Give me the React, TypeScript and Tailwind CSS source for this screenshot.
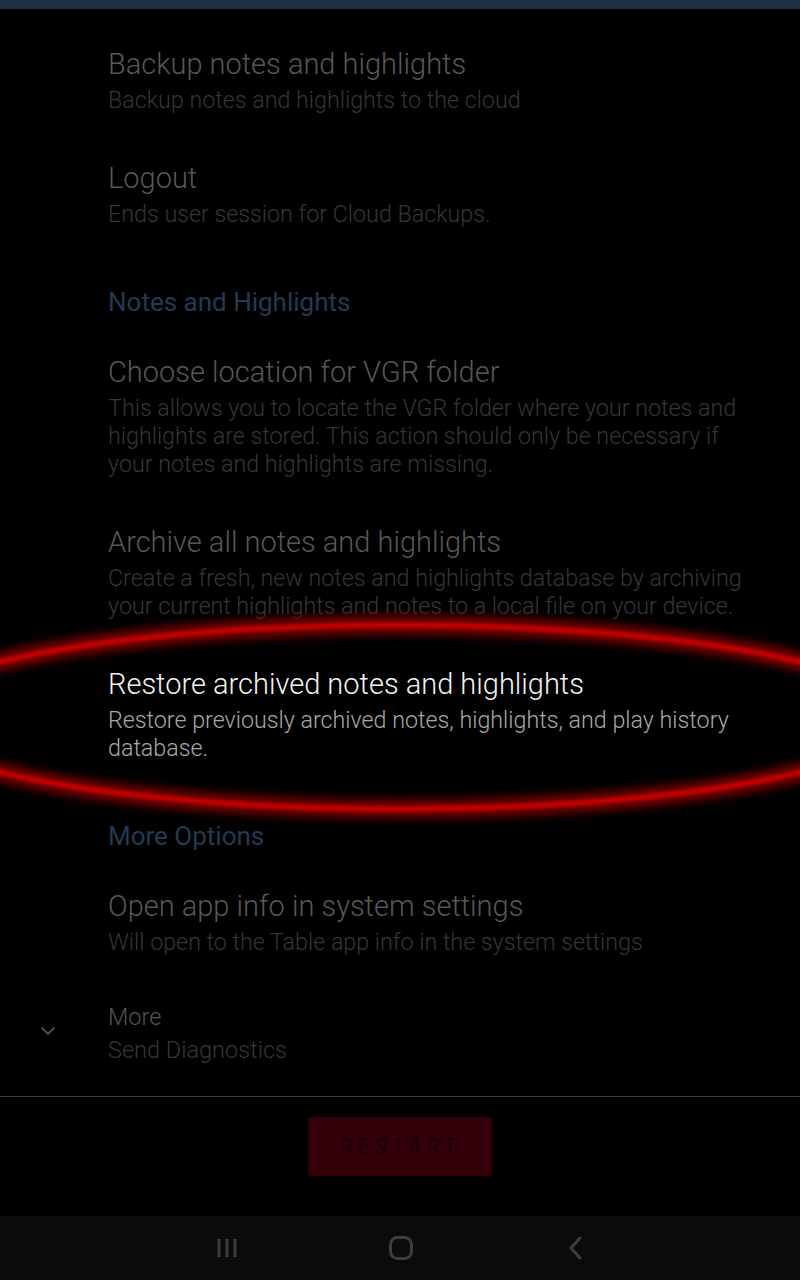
import { ChevronDown } from 'lucide-react'

type Pref = {
  title: string
  summary: string
  active?: boolean
}

const accountPrefs: Pref[] = [
  { title: 'Backup notes and highlights', summary: 'Backup notes and highlights to the cloud' },
  { title: 'Logout', summary: 'Ends user session for Cloud Backups.' },
]

const notesPrefs: Pref[] = [
  {
    title: 'Choose location for VGR folder',
    summary:
      'This allows you to locate the VGR folder where your notes and highlights are stored. This action should only be necessary if your notes and highlights are missing.',
  },
  {
    title: 'Archive all notes and highlights',
    summary:
      'Create a fresh, new notes and highlights database by archiving your current highlights and notes to a local file on your device.',
  },
  {
    title: 'Restore archived notes and highlights',
    summary: 'Restore previously archived notes, highlights, and play history database.',
    active: true,
  },
]

const morePrefs: Pref[] = [
  { title: 'Open app info in system settings', summary: 'Will open to the Table app info in the system settings' },
]

function PrefRow({ pref }: { pref: Pref }) {
  return (
    <div className="pl-[108px] pr-[40px] py-[23px]">
      <div className={`text-[29px] leading-[36px] font-light ${pref.active ? 'text-[#f2f2f2]' : 'text-[#575757]'}`}>
        {pref.title}
      </div>
      <div className={`mt-1 text-[23.25px] leading-[28px] font-light ${pref.active ? 'text-[#a8a8a8]' : 'text-[#363636]'}`}>
        {pref.summary}
      </div>
    </div>
  )
}

function SectionHeader({ label }: { label: string }) {
  return (
    <div className="pl-[108px] pt-[37px] pb-[15px] text-[26px] leading-[28px] text-[#243a52]">{label}</div>
  )
}

export default function App() {
  return (
    <div className="w-[800px] h-[1280px] bg-black flex flex-col overflow-hidden font-['Roboto',_'Noto_Sans',sans-serif]">
      <div className="h-[9px] bg-[#1f3143]" />

      <main className="relative flex-1 flex flex-col">
        <div className="pt-[14px] flex-1">
          {accountPrefs.map((p) => (
            <PrefRow key={p.title} pref={p} />
          ))}
          <SectionHeader label="Notes and Highlights" />
          {notesPrefs.map((p) => (
            <PrefRow key={p.title} pref={p} />
          ))}
          <SectionHeader label="More Options" />
          {morePrefs.map((p) => (
            <PrefRow key={p.title} pref={p} />
          ))}

          <div className="relative pl-[108px] pt-[24px]">
            <ChevronDown className="absolute left-[36px] top-[40px] w-6 h-6 text-[#4a4a4a]" strokeWidth={2} />
            <div className="text-[23.5px] leading-[28px] font-light text-[#555555]">More</div>
            <div className="mt-[5px] text-[23.5px] leading-[28px] font-light text-[#363636]">Send Diagnostics</div>
          </div>
        </div>

        {/* red highlight ring drawn over the list */}
        <svg className="absolute inset-0 w-full h-full pointer-events-none">
          <defs>
            <filter id="glow" x="-20%" y="-60%" width="140%" height="220%">
              <feGaussianBlur stdDeviation="5" />
            </filter>
            <filter id="soft" x="-20%" y="-60%" width="140%" height="220%">
              <feGaussianBlur stdDeviation="1.5" />
            </filter>
          </defs>
          <ellipse cx="400" cy="708" rx="500" ry="92" fill="none" stroke="#7a0000" strokeWidth="18" filter="url(#glow)" />
          <ellipse cx="400" cy="708" rx="500" ry="92" fill="none" stroke="#c80000" strokeWidth="5" filter="url(#soft)" />
        </svg>
      </main>

      <div className="h-[120px] border-t border-[#3d3d3d] flex justify-center pt-[20px]">
        <button
          type="button"
          className="w-[184px] h-[59px] rounded bg-[#33000a] text-[#1f0006] text-[22px] font-medium tracking-[4px]"
        >
          RESTART
        </button>
      </div>

      <div className="h-[64px] bg-[#0b0b0b] flex items-center justify-center">
        <svg width="22" height="22" viewBox="0 0 22 22" className="text-[#3d3d3d] mr-[151px]">
          <path d="M3 2v18M11 2v18M19 2v18" stroke="currentColor" strokeWidth="3" fill="none" />
        </svg>
        <svg width="24" height="24" viewBox="0 0 24 24" className="text-[#3d3d3d]">
          <rect x="1.5" y="1.5" width="21" height="21" rx="7" stroke="currentColor" strokeWidth="3" fill="none" />
        </svg>
        <svg width="16" height="24" viewBox="0 0 16 24" className="text-[#3d3d3d] ml-[155px]">
          <path d="M12 2L3 12l9 10" stroke="currentColor" strokeWidth="3" fill="none" strokeLinecap="round" strokeLinejoin="round" />
        </svg>
      </div>
    </div>
  )
}
